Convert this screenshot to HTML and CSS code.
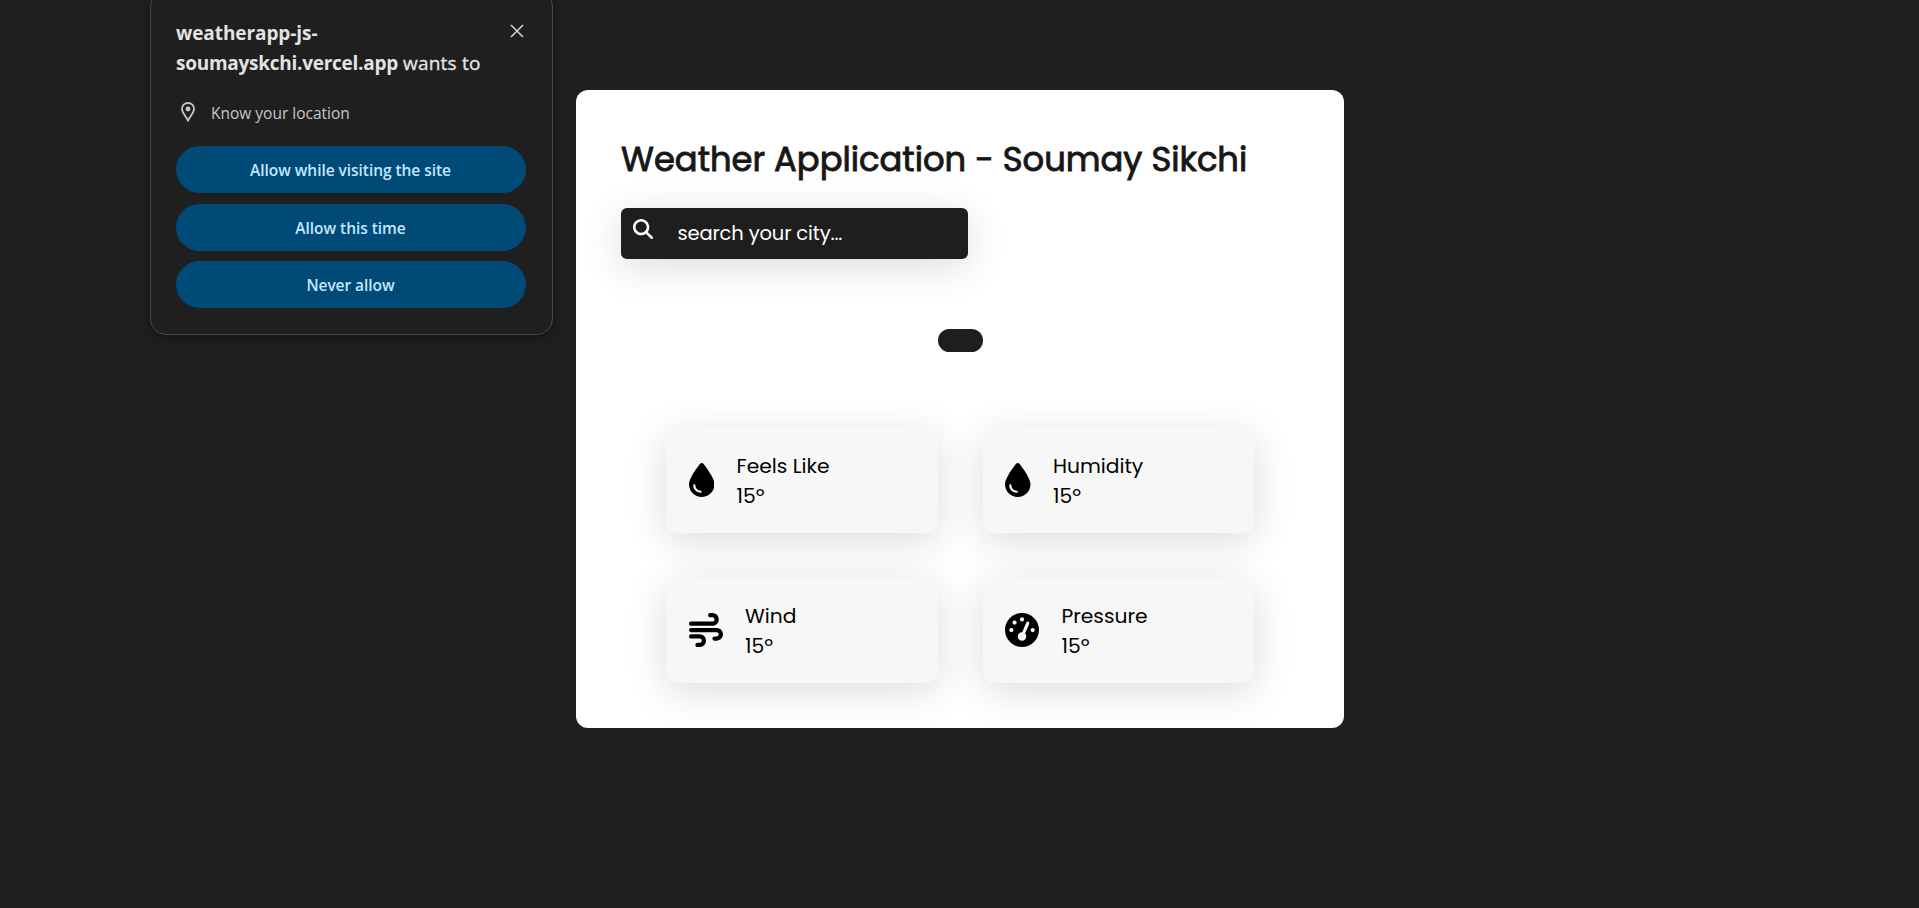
FILE: index.html
```html
<!DOCTYPE html>
<html lang="en">
<head>
<meta charset="utf-8">
<title>Weather Application</title>
<link rel="stylesheet" href="styles.css">
</head>
<body>
<aside class="prompt">
  <div class="prompt-head">
    <p class="prompt-title"><b class="host-a">weatherapp-js-</b><br><b class="host-b">soumayskchi.vercel.app</b> <span class="wants">wants to</span></p>
    <svg class="close" viewBox="0 0 14 14"><path d="M1 1l12 12M13 1L1 13"/></svg>
  </div>
  <div class="permission">
    <svg class="pin" viewBox="0 0 14 20"><path d="M7 1C3.600 1 1 3.600 1 6.900c0 3.500 3.300 6.500 6 11.600 2.700-5.100 6-8.100 6-11.600C13 3.600 10.400 1 7 1z"/><circle cx="7" cy="7" r="2.400"/></svg>
    <span>Know your location</span>
  </div>
  <div class="choices">
    <button class="choice">Allow while visiting the site</button>
    <button class="choice">Allow this time</button>
    <button class="choice">Never allow</button>
  </div>
</aside>
<main class="app">
  <h1 class="heading">Weather Application - Soumay Sikchi</h1>
  <div class="search">
    <svg class="search-icon" viewBox="0 0 512 512"><path d="M416 208c0 45.900-14.900 88.300-40 122.700L502.600 457.400c12.500 12.500 12.500 32.800 0 45.300s-32.800 12.500-45.300 0L330.700 376c-34.400 25.200-76.800 40-122.700 40C93.100 416 0 322.900 0 208S93.100 0 208 0S416 93.100 416 208zM208 352a144 144 0 1 0 0-288 144 144 0 1 0 0 288z"/></svg>
    <span class="query">search your city...</span>
  </div>
  <div class="badge"></div>
  <section class="stats">
    <article class="stat">
      <svg class="stat-icon drop" viewBox="0 0 384 512"><path d="M192 512C86 512 0 426 0 320C0 228.800 130.200 57.700 166.600 11.700C172.600 4.200 181.500 0 191.100 0h1.800c9.600 0 18.500 4.200 24.500 11.700C253.800 57.700 384 228.800 384 320c0 106-86 192-192 192zM96 336c0-8.800-7.200-16-16-16s-16 7.200-16 16c0 61.900 50.100 112 112 112c8.800 0 16-7.200 16-16s-7.200-16-16-16c-44.200 0-80-35.800-80-80z"/></svg>
      <div class="stat-text"><p>Feels Like</p><p>15º</p></div>
    </article>
    <article class="stat">
      <svg class="stat-icon drop" viewBox="0 0 384 512"><path d="M192 512C86 512 0 426 0 320C0 228.800 130.200 57.700 166.600 11.700C172.600 4.200 181.500 0 191.100 0h1.800c9.600 0 18.500 4.200 24.500 11.700C253.800 57.700 384 228.800 384 320c0 106-86 192-192 192zM96 336c0-8.800-7.200-16-16-16s-16 7.200-16 16c0 61.900 50.100 112 112 112c8.800 0 16-7.200 16-16s-7.200-16-16-16c-44.200 0-80-35.800-80-80z"/></svg>
      <div class="stat-text"><p>Humidity</p><p>15º</p></div>
    </article>
    <article class="stat">
      <svg class="stat-icon" viewBox="0 0 512 512"><path d="M288 32c0 17.700 14.300 32 32 32h32c17.700 0 32 14.300 32 32s-14.300 32-32 32H32c-17.700 0-32 14.300-32 32s14.300 32 32 32H352c53 0 96-43 96-96s-43-96-96-96H320c-17.700 0-32 14.300-32 32zm64 352c0 17.700 14.300 32 32 32h32c53 0 96-43 96-96s-43-96-96-96H32c-17.700 0-32 14.300-32 32s14.300 32 32 32H416c17.700 0 32 14.300 32 32s-14.300 32-32 32H384c-17.700 0-32 14.300-32 32zM128 512h32c53 0 96-43 96-96s-43-96-96-96H32c-17.700 0-32 14.300-32 32s14.300 32 32 32H160c17.700 0 32 14.300 32 32s-14.300 32-32 32H128c-17.700 0-32 14.300-32 32s14.300 32 32 32z"/></svg>
      <div class="stat-text"><p>Wind</p><p>15º</p></div>
    </article>
    <article class="stat">
      <svg class="stat-icon" viewBox="0 0 512 512"><path d="M0 256a256 256 0 1 1 512 0A256 256 0 1 1 0 256zM288 96a32 32 0 1 0 -64 0 32 32 0 1 0 64 0zM256 416c35.300 0 64-28.700 64-64c0-17.400-6.900-33.100-18.100-44.600L366 161.700c5.300-12.100-.2-26.300-12.300-31.600s-26.300 .2-31.600 12.300L257.900 288c-.6 0-1.300 0-1.900 0c-35.300 0-64 28.700-64 64s28.700 64 64 64zM176 144a32 32 0 1 0 -64 0 32 32 0 1 0 64 0zM96 288a32 32 0 1 0 0-64 32 32 0 1 0 0 64zm352-32a32 32 0 1 0 -64 0 32 32 0 1 0 64 0z"/></svg>
      <div class="stat-text"><p>Pressure</p><p>15º</p></div>
    </article>
  </section>
</main>
</body>
</html>
```

FILE: styles.css
```css
* { box-sizing: border-box; margin: 0; padding: 0; }

body {
  height: 908px;
  overflow: hidden;
  background: #1e1e1e;
  font-family: Poppins, Inter, "Open Sans", sans-serif;
}

/* Permission prompt */
.prompt {
  position: absolute;
  left: 150px;
  top: -10px;
  width: 403px;
  height: 345px;
  padding: 27px 26px 0 25px;
  border: 1px solid #474747;
  border-radius: 16px;
  background: #1f1f1f;
  box-shadow: 0 2px 6px rgba(0, 0, 0, .35);
  color: #e3e3e3;
  font-family: "Segoe UI", "Open Sans", "Noto Sans", sans-serif;
}
.prompt-head { display: flex; justify-content: space-between; }
.prompt-title { font-size: 19px; line-height: 30px; font-weight: 500; white-space: nowrap; }
.prompt-title b { font-weight: 700; }
.host-a { letter-spacing: -.08px; }
.host-b { letter-spacing: -.26px; }
.wants { letter-spacing: .22px; -webkit-text-stroke: .35px; }
.close { width: 14px; height: 14px; margin: 6px 2px 0 0; fill: none; stroke: #d0d0d0; stroke-width: 1.6; }
.permission {
  display: flex;
  align-items: center;
  height: 24px;
  margin-top: 23px;
  padding-left: 5px;
  gap: 16px;
  font-size: 15.500px;
  color: #c7c7c7;
}
.pin { width: 14px; height: 20px; margin-bottom: 2px; fill: none; stroke: #c7c7c7; stroke-width: 1.800; }
.pin circle { fill: #c7c7c7; stroke: none; }
.choices { display: flex; flex-direction: column; gap: 10.500px; margin-top: 21px; }
.choice {
  height: 47px;
  padding: 2px 1px 0 0;
  border: 0;
  border-radius: 24px;
  background: #004a77;
  color: #c2e7ff;
  font: 600 15.500px/45px "Segoe UI", "Open Sans", sans-serif;
  letter-spacing: -.05px;
}

/* Weather card */
.app {
  width: 768px;
  height: 638px;
  margin: 90px 0 0 576px;
  padding: 45px;
  border-radius: 12px;
  background: #fff;
}
.heading {
  height: 50px;
  font-size: 33.750px;
  line-height: 50px;
  font-weight: 400;
  -webkit-text-stroke: .9px #171717;
  color: #171717;
  white-space: nowrap;
}
.search {
  display: flex;
  align-items: center;
  width: 347px;
  height: 51px;
  margin-top: 23px;
  padding: 0 12px;
  gap: 24.500px;
  border-radius: 6px;
  background: #1e1e1e;
  box-shadow: 0 8px 40px rgba(0, 0, 0, .14);
  color: #fff;
  font-size: 19.500px;
}
.query { letter-spacing: -.15px; }
.search-icon { width: 20px; height: 20px; margin-bottom: 10px; fill: #fff; }
.badge { width: 45px; height: 23px; margin: 70px auto 0; border-radius: 12px; background: #1e1e1e; }
.stats {
  display: grid;
  grid-template-columns: 1fr 1fr;
  grid-auto-rows: 105px;
  gap: 45px;
  margin-top: 76px;
  padding: 0 45px;
}
.stat {
  display: flex;
  align-items: center;
  gap: 22.500px;
  padding: 0 22.500px;
  border-radius: 12px;
  background: #f7f7f7;
  box-shadow: 0 8px 40px rgba(0, 0, 0, .14);
}
.stat-icon { width: 34px; height: 34px; margin-bottom: 1px; }
.stat-icon.drop { width: 25.500px; }
.stat-text { font-size: 20.250px; line-height: 30px; color: #000; white-space: nowrap; }
```
